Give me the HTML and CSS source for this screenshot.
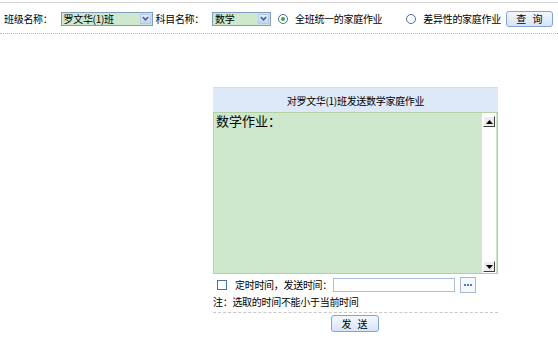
FILE: index.html
```html
<!DOCTYPE html>
<html>
<head>
<meta charset="utf-8">
<link rel="stylesheet" href="styles.css">
</head>
<body>
<div class="toolbar">
  <span class="label">班级名称：</span>
  <div class="select sel-class"><span class="sel-text">罗文华(1)班</span><span class="sel-btn"><svg width="7" height="5" viewBox="0 0 7 5"><path d="M0.8 1 L3.5 3.8 L6.2 1" fill="none" stroke="#3d5a99" stroke-width="1.5"/></svg></span></div>
  <span class="label lbl2">科目名称：</span>
  <div class="select sel-subj"><span class="sel-text">数学</span><span class="sel-btn"><svg width="7" height="5" viewBox="0 0 7 5"><path d="M0.8 1 L3.5 3.8 L6.2 1" fill="none" stroke="#3d5a99" stroke-width="1.5"/></svg></span></div>
  <span class="radio checked"></span><span class="label">全班统一的家庭作业</span>
  <span class="radio r2"></span><span class="label">差异性的家庭作业</span>
  <span class="btn btn-query">查 询</span>
</div>

<div class="panel">
  <div class="panel-head">对罗文华(1)班发送数学家庭作业</div>
  <div class="editor">
    <div class="editor-text">数学作业：</div>
    <div class="scrollbar">
      <span class="sb-btn"><svg width="7" height="4" viewBox="0 0 7 4"><path d="M0 4 L3.5 0 L7 4 Z" fill="#000"/></svg></span>
      <span class="sb-track"></span>
      <span class="sb-btn"><svg width="7" height="4" viewBox="0 0 7 4"><path d="M0 0 L3.5 4 L7 0 Z" fill="#000"/></svg></span>
    </div>
  </div>
  <div class="timer-row">
    <span class="checkbox"></span>
    <span class="label">定时时间，发送时间：</span>
    <span class="time-input"></span>
    <span class="dots-btn"><svg width="8" height="2" viewBox="0 0 8 2"><rect x="0" y="0" width="2" height="2" fill="#4a78c8"/><rect x="3" y="0" width="2" height="2" fill="#4a78c8"/><rect x="6" y="0" width="2" height="2" fill="#4a78c8"/></svg></span>
  </div>
  <div class="note">注：选取的时间不能小于当前时间</div>
  <div class="send-row"><span class="btn btn-send">发 送</span></div>
</div>
</body>
</html>
```

FILE: styles.css
```css
html, body {
  margin: 0;
  padding: 0;
  background: #fff;
  font-family: "Noto Sans CJK SC", "Noto Sans", sans-serif;
  font-size: 10px;
  letter-spacing: -0.3px;
  color: #000;
}
.toolbar {
  margin-top: 2px;
  border-top: 1px solid #d0d0d0;
  border-bottom: 1px dotted #b8b8b8;
  height: 32px;
  display: flex;
  align-items: center;
  padding-left: 4px;
  padding-top: 1px;
  box-sizing: border-box;
}
.label {
  white-space: nowrap;
  line-height: 14px;
}
.select {
  display: flex;
  align-items: center;
  height: 14px;
  box-sizing: border-box;
  border: 1px solid #7f9db9;
  background: #cde8cd;
  margin-left: 8px;
}
.sel-class { width: 92px; }
.sel-subj { width: 59px; }
.sel-text {
  flex: 1;
  padding-left: 2px;
  line-height: 12px;
}
.sel-btn {
  width: 11px;
  height: 10px;
  margin-right: 1px;
  border: 1px solid #b5c8ee;
  box-sizing: border-box;
  background: linear-gradient(#e6eefc, #c3d3f5);
  display: flex;
  align-items: center;
  justify-content: center;
}
.lbl2 { margin-left: 3px; }
.radio {
  width: 10px;
  height: 10px;
  border-radius: 50%;
  border: 1px solid #4a6fa5;
  box-sizing: border-box;
  background: #fff;
  margin-left: 7px;
  margin-right: 7px;
  position: relative;
}
.radio.checked::after {
  content: "";
  position: absolute;
  left: 2px;
  top: 2px;
  width: 4px;
  height: 4px;
  border-radius: 50%;
  background: #2fae3a;
}
.r2 { margin-left: 24px; }
.btn {
  display: inline-flex;
  align-items: center;
  justify-content: center;
  box-sizing: border-box;
  border: 1px solid #7ea4d9;
  border-radius: 3px;
  background: linear-gradient(#f4f8fe, #d7e4f7);
  white-space: nowrap;
  letter-spacing: 0;
  word-spacing: 4px;
}
.btn-query {
  width: 47px;
  height: 16px;
  margin-left: 5px;
}
.panel {
  margin: 53px 0 0 213px;
  width: 285px;
}
.panel-head {
  height: 25px;
  background: #dde9f9;
  border-top: 1px solid #cddcf0;
  box-sizing: border-box;
  display: flex;
  align-items: center;
  justify-content: center;
}
.editor {
  height: 162px;
  display: flex;
  border: 1px solid #b4cfa0;
  background: #cde8cd;
  box-sizing: border-box;
}
.editor-text {
  flex: 1;
  font-size: 13px;
  letter-spacing: 0;
  line-height: 16px;
  padding: 0 0 0 2px;
}
.scrollbar {
  width: 14px;
  background: #fff;
  display: flex;
  flex-direction: column;
  padding: 3px 0 1px;
  margin-right: 1px;
}
.sb-btn {
  height: 11px;
  box-sizing: border-box;
  border: 1px solid #fff;
  border-right-color: #404040;
  border-bottom-color: #404040;
  background: #ececec;
  display: flex;
  align-items: center;
  justify-content: center;
  margin: 0 1px;
}
.sb-track { flex: 1; }
.timer-row {
  display: flex;
  align-items: center;
  height: 17px;
  margin-top: 2px;
  padding-left: 4px;
}
.checkbox {
  width: 10px;
  height: 10px;
  box-sizing: border-box;
  border: 1px solid #4a6fa5;
  background: #fff;
  margin-right: 8px;
}
.time-input {
  width: 122px;
  height: 14px;
  box-sizing: border-box;
  border: 1px solid #a8bfe0;
  background: #fff;
  margin-left: 1px;
}
.dots-btn {
  width: 16px;
  height: 16px;
  box-sizing: border-box;
  border: 1px solid #a8b8d0;
  background: #f6f8fc;
  margin-left: 5px;
  display: flex;
  align-items: center;
  justify-content: center;
}
.note {
  line-height: 14px;
  margin-top: 2px;
  padding-bottom: 3px;
  border-bottom: 1px dashed #c8c8c8;
}
.send-row {
  display: flex;
  justify-content: center;
  padding-top: 2px;
  padding-right: 2px;
}
.btn-send {
  width: 48px;
  height: 17px;
}
```
